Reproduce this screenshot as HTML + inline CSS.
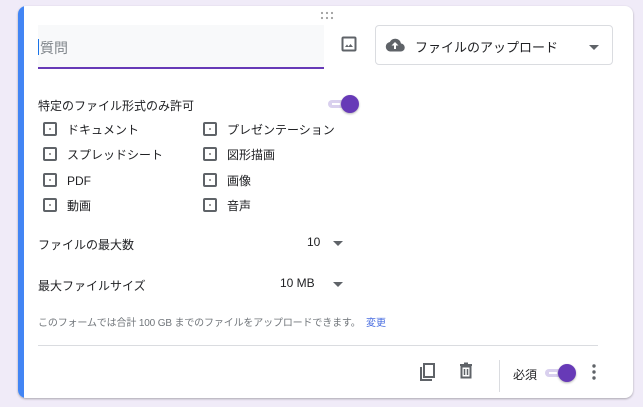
<!DOCTYPE html>
<html><head><meta charset="utf-8"><style>
*{margin:0;padding:0;box-sizing:border-box}
body{width:643px;height:407px;background:#f0ebf8;position:relative;overflow:hidden;font-family:"Liberation Sans","Noto Sans CJK JP",sans-serif;color:#202124}
.card{position:absolute;left:18px;top:6px;width:615px;height:392px;background:#fff;border-radius:8px;box-shadow:0 1px 2px rgba(0,0,0,.3);overflow:hidden}
.bar{position:absolute;left:0;top:0;width:6px;height:100%;background:#4285f4}
.a{position:absolute;white-space:nowrap}
.cb{position:absolute;width:14px;height:14px;border:2px solid #5f6368;border-radius:2px}
.cb::after{content:"";position:absolute;left:4px;top:4px;width:2px;height:2px;background:#999}
.lbl{position:absolute;font-size:12px;line-height:14px}
.tg{position:absolute;width:30px;height:18px}
.tg .t{position:absolute;left:0;top:5px;width:24px;height:8px;border-radius:4px;background:#d9d0ee}
.tg .t::after{content:"";position:absolute;left:4px;top:3px;width:8px;height:1.5px;background:#fff}
.tg .k{position:absolute;left:13px;top:0;width:18px;height:18px;border-radius:50%;background:#673ab7;box-shadow:0 1px 2px rgba(0,0,0,.3)}
.arr{position:absolute;width:0;height:0;border-left:5px solid transparent;border-right:5px solid transparent;border-top:5px solid #5f6368}
</style></head><body>
<div class="card">
<div class="bar"></div>
<svg class="a" style="left:302px;top:5px" width="14" height="9"><g fill="#9e9e9e"><circle cx="2" cy="2" r="1.1"/><circle cx="7" cy="2" r="1.1"/><circle cx="12" cy="2" r="1.1"/><circle cx="2" cy="7" r="1.1"/><circle cx="7" cy="7" r="1.1"/><circle cx="12" cy="7" r="1.1"/></g></svg>
<div class="a" style="left:20px;top:19px;width:286px;height:44px;background:#f8f9fa;border-bottom:2px solid #673ab7"></div>
<div class="a" style="left:20px;top:33px;width:1px;height:16px;background:#1a73e8"></div>
<div class="a" style="left:22px;top:32px;font-size:14px;color:#80868b">質問</div>
<svg class="a" style="left:323px;top:30px" width="16" height="16" viewBox="0 0 16 16"><rect x="1.5" y="1.5" width="13" height="13" rx="1" fill="none" stroke="#5f6368" stroke-width="2"/><path d="M4 11l2-2.5 1.5 2 2-2.5 2.5 3z" fill="#5f6368"/></svg>
<div class="a" style="left:357px;top:19px;width:238px;height:40px;border:1px solid #dadce0;border-radius:4px"></div>
<svg class="a" style="left:367px;top:32px" width="20" height="14" viewBox="0 0 20 14"><path d="M16 5.5A6 6 0 0 0 4.8 4 4.8 4.8 0 0 0 5 13.5h10.5a4 4 0 0 0 .5-8z" fill="#5f6368"/><path d="M10 4l-3.5 3.5H9V11h2V7.5h2.5z" fill="#fff"/></svg>
<div class="a" style="left:397px;top:31px;font-size:13px">ファイルのアップロード</div>
<div class="arr" style="left:571px;top:39px"></div>
<div class="a" style="left:20px;top:91px;font-size:12px">特定のファイル形式のみ許可</div>
<div class="tg" style="left:310px;top:89px"><div class="t"></div><div class="k"></div></div>
<div class="cb" style="left:25px;top:116px"></div><div class="lbl" style="left:49px;top:117px">ドキュメント</div>
<div class="cb" style="left:25px;top:141px"></div><div class="lbl" style="left:49px;top:142px">スプレッドシート</div>
<div class="cb" style="left:25px;top:167px"></div><div class="lbl" style="left:49px;top:168px">PDF</div>
<div class="cb" style="left:25px;top:192px"></div><div class="lbl" style="left:49px;top:193px">動画</div>
<div class="cb" style="left:185px;top:116px"></div><div class="lbl" style="left:209px;top:117px">プレゼンテーション</div>
<div class="cb" style="left:185px;top:141px"></div><div class="lbl" style="left:209px;top:142px">図形描画</div>
<div class="cb" style="left:185px;top:167px"></div><div class="lbl" style="left:209px;top:168px">画像</div>
<div class="cb" style="left:185px;top:192px"></div><div class="lbl" style="left:209px;top:193px">音声</div>
<div class="a" style="left:20px;top:230px;font-size:12px">ファイルの最大数</div>
<div class="a" style="left:289px;top:229px;font-size:12px">10</div>
<div class="arr" style="left:315px;top:235px"></div>
<div class="a" style="left:20px;top:271px;font-size:12px">最大ファイルサイズ</div>
<div class="a" style="left:262px;top:270px;font-size:12px">10 MB</div>
<div class="arr" style="left:315px;top:276px"></div>
<div class="a" style="left:20px;top:308px;font-size:10px;color:#70757a;letter-spacing:-0.15px">このフォームでは合計 100 GB までのファイルをアップロードできます。</div>
<div class="a" style="left:348px;top:308px;font-size:10px;color:#4a6ee0">変更</div>
<div class="a" style="left:20px;top:339px;width:560px;height:1px;background:#dadce0"></div>
<svg class="a" style="left:400px;top:356px" width="20" height="20" viewBox="0 0 20 20"><path d="M3 5v13h11" fill="none" stroke="#5f6368" stroke-width="2"/><rect x="6" y="2" width="10" height="13" fill="none" stroke="#5f6368" stroke-width="2"/></svg>
<svg class="a" style="left:440px;top:356px" width="16" height="18" viewBox="0 0 16 18"><path d="M2 3h12M6 1.5h4" stroke="#5f6368" stroke-width="2"/><path d="M3.5 4.5h9v11h-9z" fill="none" stroke="#5f6368" stroke-width="2"/><path d="M6.5 7v6M9.5 7v6" stroke="#5f6368" stroke-width="1.5"/></svg>
<div class="a" style="left:481px;top:354px;width:1px;height:32px;background:#dadce0"></div>
<div class="a" style="left:495px;top:360px;font-size:12px">必須</div>
<div class="tg" style="left:527px;top:358px"><div class="t"></div><div class="k"></div></div>
<svg class="a" style="left:573px;top:358px" width="6" height="16"><g fill="#5f6368"><circle cx="3" cy="2" r="1.7"/><circle cx="3" cy="8" r="1.7"/><circle cx="3" cy="14" r="1.7"/></g></svg>
</div>
</body></html>
